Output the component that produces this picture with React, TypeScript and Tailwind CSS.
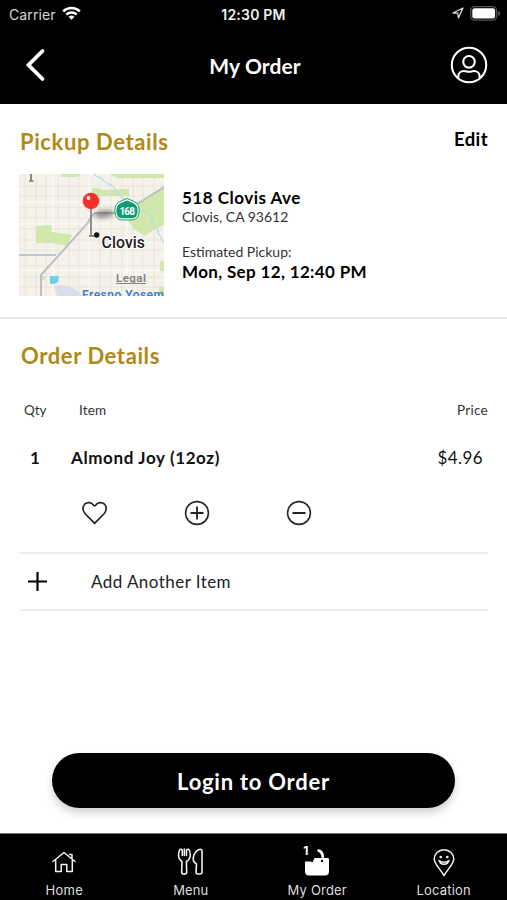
import React from "react";

function StatusBar() {
  return (
    <div className="grid h-7 grid-cols-3 items-center pl-[9px] pr-[7px] font-['Inter',sans-serif] text-[14px]">
      <div className="flex items-center gap-[6px] text-[#d8d8d8]">
        <span className="tracking-[0.1px]">Carrier</span>
        <svg width="19" height="14" viewBox="0 0 19 14" fill="none" stroke="#fff" strokeWidth="2.5" className="-mt-[3px]">
          <path d="M1.2 5.3a12 12 0 0 1 16.6 0" />
          <path d="M4.3 8.7a7.5 7.5 0 0 1 10.4 0" />
          <path d="M9.500 13.700 6.600 10.800a4.200 4.200 0 0 1 5.800 0z" fill="#fff" stroke="none" />
        </svg>
      </div>
      <div className="pr-[2px] text-center text-[14px] font-semibold tracking-[0.2px] text-[#f0f0f0]">12:30 PM</div>
      <div className="-mt-[2px] flex items-center justify-end gap-[6px]">
        <svg width="12" height="12" viewBox="0 0 12 12" fill="none" stroke="#d4d4d4" strokeWidth="1.300" strokeLinejoin="round">
          <path d="M1 6 11 1 6.400 11 5.800 6.200z" />
        </svg>
        <svg width="30" height="15" viewBox="0 0 30 15">
          <rect x="0.700" y="0.700" width="26" height="13.400" rx="4" fill="none" stroke="#555" strokeWidth="1.300" />
          <rect x="2.300" y="2.300" width="22.800" height="10.200" rx="2.300" fill="#fff" />
          <path d="M28.200 5v5c1.400-.6 1.700-1.500 1.700-2.500S29.600 5.600 28.200 5z" fill="#666" />
        </svg>
      </div>
    </div>
  );
}

function Header() {
  return (
    <header className="h-[104px] bg-black text-white">
      <StatusBar />
      <div className="flex h-[76px] items-center justify-between pl-[25px] pr-[19px]">
        <svg width="38" height="34" viewBox="0 0 38 34" fill="none" stroke="#fff" strokeWidth="3.800" strokeLinecap="round" strokeLinejoin="miter" className="-mt-[2px]">
          <path d="M17.500 3 3.500 17l14 14" />
        </svg>
        <h1 className="pr-[3px] text-[21px] font-bold tracking-[0.1px]">My Order</h1>
        <svg width="38" height="38" viewBox="0 0 38 38" fill="none" stroke="#fff" strokeWidth="2.100" className="-mt-[2px]">
          <circle cx="19" cy="19" r="17.200" />
          <circle cx="19" cy="15.800" r="5.800" />
          <path d="M8.300 32v-1.500c0-3.500 2.700-5.500 5.700-5.500 2 0 3 .8 5 .8s3-.8 5-.8c3 0 5.700 2 5.700 5.500V32" />
        </svg>
      </div>
    </header>
  );
}

const minorStreets = [6, 17, 27, 39, 50, 60, 81, 92, 103, 114, 124, 135];
const crossStreets = [12, 22, 33, 44, 55, 66, 76, 92, 103, 113];

function AreaMap() {
  return (
    <svg width="145" height="122" viewBox="0 0 145 122" className="shrink-0">
      <rect width="145" height="122" fill="#f5f2ea" />
      <path d="M35 112c7-2 14-1 20 3 4 2 7 4 8 7H38z" fill="#d8dced" />
      <g stroke="#e2e1dd" strokeWidth="0.800">
        {minorStreets.map((x) => (
          <path key={x} d={`M${x} 0V122`} />
        ))}
        {crossStreets.map((y) => (
          <path key={y} d={`M0 ${y}H145`} />
        ))}
      </g>
      <path d="M0 28H145M0 50H115M0 96H145M34 0V122M70 0V122M108 30V122" stroke="#fbfaf6" strokeWidth="1" />
      <path
        d="M91 0h54v4H98zM73 14h6l3 2 28-1v7H73zM17 52l15-1 1 7 20 3-5 11-16-3H17zM114 28l10-2 8-6 13-6v37l-9 4-10 7-11-7-7-10 6-6zM141 87h4v10h-4zM21 102h6l-2 4h-4zM42 0h20l-4 3H42zM140 113h5v9h-5z"
        fill="#cde7a6"
        opacity="0.920"
      />
      <path d="M75 0c4 5 7 2 10 7s8 1 11 8 8 8 13 13 7 10 16 9c6 5 9 4 8 10s7 5 6 12c4 4 3 7 6 10" fill="none" stroke="#b4dfe8" strokeWidth="1.300" />
      <path d="M0 81h37" stroke="#c1c2d2" strokeWidth="1.800" />
      <path d="M22 122v-21L68 50c4-6 4-10 9-11h27l41-26" fill="none" stroke="#bdbec6" strokeWidth="2" />
      <path d="M31 102h9l-1 6-4 2h-4z" fill="#6fcfec" />
      <defs>
        <filter id="pinShadow" x="-50%" y="-100%" width="200%" height="300%">
          <feGaussianBlur stdDeviation="2.200" />
        </filter>
      </defs>
      <ellipse cx="85" cy="40" rx="10" ry="4" fill="#555" opacity="0.600" filter="url(#pinShadow)" transform="rotate(-6 85 40)" />
      <path d="M12 0v7M10 7h4.500" stroke="#777" strokeWidth="1.700" />
      <path d="M72 33v29M70 62h5" stroke="#858585" strokeWidth="1.800" />
      <circle cx="72" cy="27" r="8.300" fill="#f9302a" />
      <circle cx="69.500" cy="24" r="1.900" fill="#fff" />
      <circle cx="77.700" cy="61" r="2.700" fill="#111" />
      <path d="M108 24.500c4 2 8 2.500 10.500 6 2.500 4 2 8.500 0 12.500-2 3-4 3-10.500 3s-8.500 0-10.500-3c-2-4-2.500-8.500 0-12.500 2.500-3.500 6.500-4 10.500-6z" fill="#fff" stroke="#1c9a72" strokeWidth="1" />
      <path d="M108 26.500c3 1.500 7 2 9.300 5.200 2 3.300 1.700 7 0 10.300-1.300 2.300-2.800 2.300-9.300 2.300s-8 0-9.300-2.300c-1.700-3.300-2-7 0-10.300 2.300-3.200 6.300-3.700 9.300-5.200z" fill="#109c72" />
      <text x="108.200" y="41" textAnchor="middle" fontFamily="Roboto, sans-serif" fontSize="10" fontWeight="700" fill="#fff" textLength="15.500">168</text>
      <text x="82.500" y="73.500" fontFamily="Roboto, sans-serif" fontSize="15.800" fontWeight="500" fill="#222" stroke="#fff" strokeWidth="2" paintOrder="stroke" textLength="43.500">Clovis</text>
      <text x="97" y="107.500" fontFamily="Roboto, sans-serif" fontSize="11.500" fontWeight="600" fill="#828282" textLength="30">Legal</text>
      <path d="M97 109.500h30" stroke="#828282" strokeWidth="1" />
      <text x="63" y="125" fontFamily="Roboto, sans-serif" fontSize="12" fontWeight="600" fill="#3f7bd3" textLength="82">Fresno Yosem</text>
    </svg>
  );
}

function PickupDetails() {
  return (
    <section className="h-[213px] pl-[19px] pr-[19px] pt-[23px]">
      <div className="flex h-[47px] items-start justify-between">
        <h2 className="pl-px pt-px text-[22px] font-bold leading-7 tracking-[0.6px] text-[#b28814]">Pickup Details</h2>
        <span className="text-[18.500px] font-bold leading-6 tracking-[0.4px]">Edit</span>
      </div>
      <div className="flex gap-[18px]">
        <AreaMap />
        <div className="pt-[13px]">
          <div className="text-[17px] font-bold leading-[22px] tracking-[0.5px]">518 Clovis Ave</div>
          <div className="text-[14px] leading-4 text-[#333]">Clovis, CA 93612</div>
          <div className="mt-[19px] text-[14px] leading-4 text-[#333]">Estimated Pickup:</div>
          <div className="mt-px text-[17px] font-bold leading-[22px] tracking-[0.340px]">Mon, Sep 12, 12:40 PM</div>
        </div>
      </div>
    </section>
  );
}

function OrderDetails() {
  return (
    <section className="px-[19px] pt-[23px]">
      <h2 className="pl-[2px] text-[22px] font-bold leading-7 tracking-[0.6px] text-[#b28814]">Order Details</h2>
      <div className="mt-[30px] flex h-5 items-center pl-[5px] text-[13.500px] text-[#333]">
        <span className="w-[55px]">Qty</span>
        <span className="flex-1 tracking-[0.2px]">Item</span>
        <span className="tracking-[0.3px]">Price</span>
      </div>
      <div className="mt-[26px] flex h-6 items-center pl-[11px] pr-[5px] text-[17px] text-[#111]">
        <span className="w-[41px] font-bold">1</span>
        <span className="flex-1 font-bold tracking-[0.620px]">Almond Joy (12oz)</span>
        <span className="tracking-[0.4px]">$4.96</span>
      </div>
      <div className="mt-[29px] flex h-[28px] items-center gap-[76px] pl-[62px]">
        <svg width="27" height="26" viewBox="0 0 27 26" fill="none" stroke="#222" strokeWidth="1.700" strokeLinejoin="round">
          <path d="M13.600 23.300 3.900 13.500C1.400 10.700 1.300 6.400 3.900 4c2.700-2.200 6.200-1.800 8.300.8.5.9.9 1 1.400 1s.9-.1 1.400-1c2.100-2.600 5.600-3 8.300-.8 2.600 2.400 2.500 6.700 0 9.500z" />
        </svg>
        <svg width="26" height="26" viewBox="0 0 26 26" fill="none" stroke="#222" strokeWidth="1.600" strokeLinecap="round">
          <circle cx="13" cy="13" r="11.400" />
          <path d="M7.200 13h11.600M13 7.200v11.600" strokeWidth="1.800" />
        </svg>
        <svg width="26" height="26" viewBox="0 0 26 26" fill="none" stroke="#222" strokeWidth="1.600" strokeLinecap="round">
          <circle cx="13" cy="13" r="11.400" />
          <path d="M7.200 13h11.600" strokeWidth="1.800" />
        </svg>
      </div>
      <div className="ml-px mt-[25px] flex h-[59px] items-center border-y-2 border-[#eeeeee] pl-[8px]">
        <svg width="19" height="19" viewBox="0 0 19 19" stroke="#000" strokeWidth="2.200">
          <path d="M0 9.500h19M9.500 0v19" />
        </svg>
        <span className="pl-11 text-[17px] tracking-[0.450px] text-[#222]">Add Another Item</span>
      </div>
    </section>
  );
}

function TabBar() {
  return (
    <nav className="grid h-[67px] grid-cols-4 border-t border-[#777] bg-black pl-px pt-[11px] font-['Inter',sans-serif] text-[13px] text-[#dedede]">
      <div className="flex flex-col items-center">
        <svg width="28" height="34" viewBox="0 0 28 34" fill="none" stroke="#f2f2f2" strokeWidth="1.500" strokeLinecap="round" strokeLinejoin="round">
          <path d="M3 16.500 14 7.500 25 16.500M5.700 15v11.500h5.500v-7h5.600v7h5.500V15M19.500 9.500h2.500v4" />
        </svg>
        <span className="mt-[2px] tracking-[0.3px]">Home</span>
      </div>
      <div className="flex flex-col items-center">
        <svg width="28" height="34" viewBox="0 0 28 34" fill="none" stroke="#f2f2f2" strokeWidth="1.600" strokeLinecap="round" strokeLinejoin="round">
          <path d="M3 4.500C1.700 6 1.500 8 1.500 10c0 3 1.200 5 3.500 6.500l-.3 11c0 2.200 5 2.200 5 0l-.3-11c2.500-1.500 3.900-3.500 3.900-6.500 0-2-.2-4-1.500-5.500M3 4.500c1.500-.6 2.300 0 2.300 1.500v4.500M7.400 4v6.500M9.500 10.500V6c0-1.500.8-2.100 2.300-1.500" />
          <path d="M21 29c-1.500 0-2-.7-2-2l.5-8c-3.500-1.700-4-5-2.500-9 1.500-3.500 4-5.500 6.500-5.700 1.200 0 1.500.5 1.500 1.700v21c0 1.500-.6 2-2 2z" />
        </svg>
        <span className="mt-[2px] tracking-[0.1px]">Menu</span>
      </div>
      <div className="flex flex-col items-center">
        <div className="relative">
          <svg width="28" height="34" viewBox="0 0 28 34">
            <path d="M2 16.500h8l1.500-3.500h13c1 0 1.500.5 1.500 1.500v12a4 4 0 0 1-4 4H6a4 4 0 0 1-4-4z" fill="#fff" />
            <path d="M14.500 5.300c3.800.2 5.300 3 5.300 7.500" fill="none" stroke="#fff" strokeWidth="2.800" />
            <circle cx="19" cy="16" r="1.200" fill="#111" />
            <circle cx="9" cy="16.300" r="1" fill="#111" />
          </svg>
          <span className="absolute left-0 top-[-2px] text-[12px] font-bold leading-4 text-white">1</span>
        </div>
        <span className="mt-[2px] tracking-[0.2px]">My Order</span>
      </div>
      <div className="flex flex-col items-center">
        <svg width="28" height="34" viewBox="0 0 28 34" fill="none" stroke="#f2f2f2" strokeWidth="1.500" strokeLinecap="round" strokeLinejoin="round">
          <path d="M14 30.500C9 22.500 4.200 18.500 4.200 14a9.800 9.300 0 0 1 19.600 0C23.800 18.500 19 22.500 14 30.500z" />
          <path d="M9 15.500c1.500 5 8.500 5 10 0-3 2.200-7 2.200-10 0z" />
          <circle cx="10.700" cy="12" r=".6" fill="#fff" />
          <circle cx="17.300" cy="12" r=".6" fill="#fff" />
        </svg>
        <span className="mt-[2px] tracking-[0.2px]">Location</span>
      </div>
    </nav>
  );
}

export default function App() {
  return (
    <div className="flex h-[900px] w-[507px] flex-col overflow-hidden bg-white font-['Lato',sans-serif] text-black">
      <Header />
      <PickupDetails />
      <div className="h-[2px] bg-[#e8e8e8]" />
      <main className="flex flex-1 flex-col">
        <OrderDetails />
        <div className="mt-auto px-[52px] pb-[25px]">
          <button className="h-[55px] w-[403px] rounded-full bg-black pt-[2px] text-[22px] font-bold tracking-[0.750px] text-white shadow-[0_5px_8px_rgba(0,0,0,0.18)]">
            Login to Order
          </button>
        </div>
      </main>
      <TabBar />
    </div>
  );
}
